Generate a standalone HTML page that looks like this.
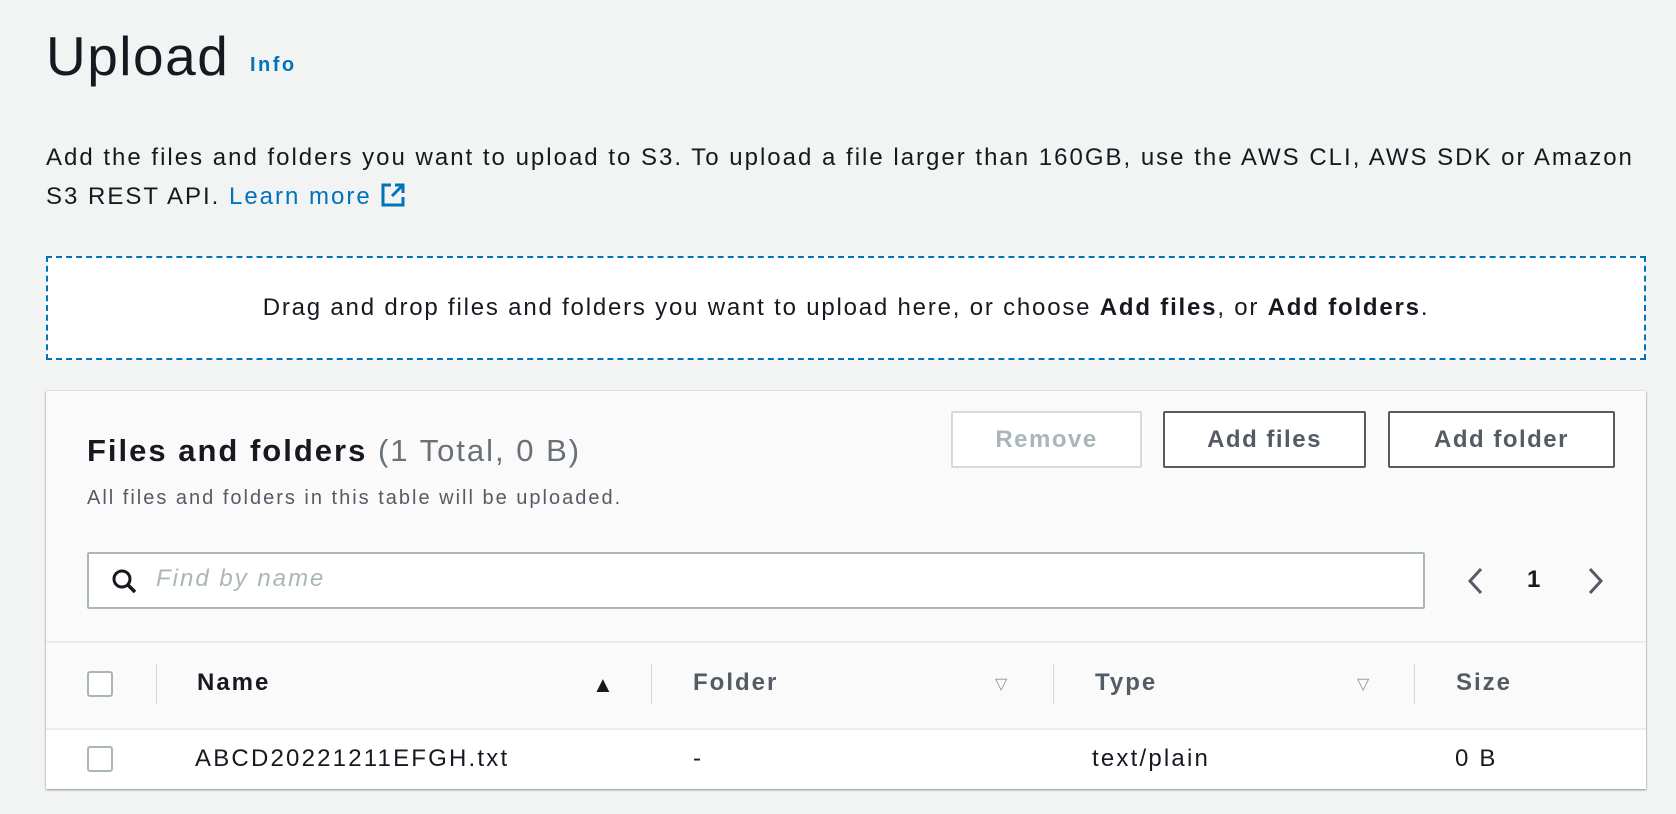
<!DOCTYPE html>
<html><head><style>
*{box-sizing:border-box;margin:0;padding:0}
body{width:1676px;height:814px;background:#f2f3f3;font-family:"Liberation Sans",sans-serif;color:#16191f;position:relative;overflow:hidden}
.a{position:absolute;white-space:nowrap}
h1{position:absolute;left:46px;top:24px;font-size:55px;font-weight:400;letter-spacing:1.5px}
.info{left:250px;top:54px;font-size:20px;font-weight:700;color:#0073bb;letter-spacing:2.5px}
.p{left:46px;font-size:24px;line-height:38px;letter-spacing:2px}
.drop{position:absolute;left:46px;top:256px;width:1600px;height:104px;border:2px dashed #0073bb;background:#fff;text-align:center;font-size:24px;line-height:100px;letter-spacing:1.8px}
.panel{position:absolute;left:46px;top:391px;width:1600px;height:398px;background:#fafafa;box-shadow:0 1px 2px rgba(0,28,36,.4),0 0 1px rgba(0,28,36,.3)}
.btn{position:absolute;top:411px;height:57px;border:2px solid #545b64;background:#fff;border-radius:2px;font-size:24px;font-weight:700;text-align:center;line-height:53px;color:#545b64;letter-spacing:1.5px}
.cb{position:absolute;left:87px;width:26px;height:26px;border:2px solid #aab7b8;border-radius:3px;background:#fff}
.div{position:absolute;top:664px;width:1px;height:40px;background:#d5dbdb}
.th{font-size:24px;font-weight:700;color:#545b64;top:669px;letter-spacing:2px}
.th.n{color:#16191f}
.td{font-size:24px;top:745px;letter-spacing:2.2px}
.tri{font-size:16px;color:#879596;top:674px}
</style></head><body>
<h1>Upload</h1>
<div class="a info">Info</div>
<div class="a p" style="top:139px">Add the files and folders you want to upload to S3. To upload a file larger than 160GB, use the AWS CLI, AWS SDK or Amazon</div>
<div class="a p" style="top:178px">S3 REST API. <span style="color:#0073bb">Learn more</span> <svg width="26" height="26" viewBox="0 0 26 26" style="vertical-align:-4px"><path d="M11 3H3v20h20v-8" fill="none" stroke="#0073bb" stroke-width="3"/><path d="M15 3h8v8M23 3L12 14" fill="none" stroke="#0073bb" stroke-width="3"/></svg></div>
<div class="drop">Drag and drop files and folders you want to upload here, or choose <b>Add files</b>, or <b>Add folders</b>.</div>
<div class="panel"></div>
<div class="a" style="left:87px;top:433px;font-size:31px;font-weight:700;letter-spacing:2px">Files and folders <span style="font-weight:400;color:#687078">(1 Total, 0 B)</span></div>
<div class="a" style="left:87px;top:487px;font-size:20px;color:#545b64;letter-spacing:2px">All files and folders in this table will be uploaded.</div>
<div class="btn" style="left:951px;width:191px;border-color:#d5dbdb;color:#aab7b8">Remove</div>
<div class="btn" style="left:1163px;width:203px">Add files</div>
<div class="btn" style="left:1388px;width:227px">Add folder</div>
<div style="position:absolute;left:87px;top:552px;width:1338px;height:57px;border:2px solid #aab7b8;border-radius:2px;background:#fff"></div>
<svg class="a" style="left:111px;top:568px" width="28" height="28" viewBox="0 0 28 28"><circle cx="11" cy="11" r="8" fill="none" stroke="#16191f" stroke-width="3"/><path d="M17 17l7 7" stroke="#16191f" stroke-width="3.5"/></svg>
<div class="a" style="left:156px;top:565px;font-size:24px;font-style:italic;color:#aab7b8;letter-spacing:2px">Find by name</div>
<svg class="a" style="left:1465px;top:566px" width="22" height="30"><path d="M16 3L5 15l11 12" fill="none" stroke="#545b64" stroke-width="3"/></svg>
<div class="a" style="left:1527px;top:566px;font-size:24px;font-weight:700">1</div>
<svg class="a" style="left:1584px;top:566px" width="22" height="30"><path d="M6 3l11 12L6 27" fill="none" stroke="#545b64" stroke-width="3"/></svg>
<div style="position:absolute;left:46px;top:641px;width:1600px;height:2px;background:#eaeded"></div>
<div style="position:absolute;left:46px;top:728px;width:1600px;height:61px;background:#fff;border-top:2px solid #eaeded"></div>
<div class="cb" style="top:671px"></div>
<div class="cb" style="top:746px"></div>
<div class="div" style="left:156px"></div><div class="div" style="left:651px"></div><div class="div" style="left:1053px"></div><div class="div" style="left:1414px"></div>
<div class="a th n" style="left:197px">Name</div>
<div class="a" style="left:592px;top:672px;font-size:22px">▲</div>
<div class="a th" style="left:693px">Folder</div>
<div class="a tri" style="left:995px">▽</div>
<div class="a th" style="left:1095px">Type</div>
<div class="a tri" style="left:1357px">▽</div>
<div class="a th" style="left:1456px">Size</div>
<div class="a td" style="left:195px">ABCD20221211EFGH.txt</div>
<div class="a td" style="left:693px">-</div>
<div class="a td" style="left:1092px">text/plain</div>
<div class="a td" style="left:1455px">0 B</div>
</body></html>
